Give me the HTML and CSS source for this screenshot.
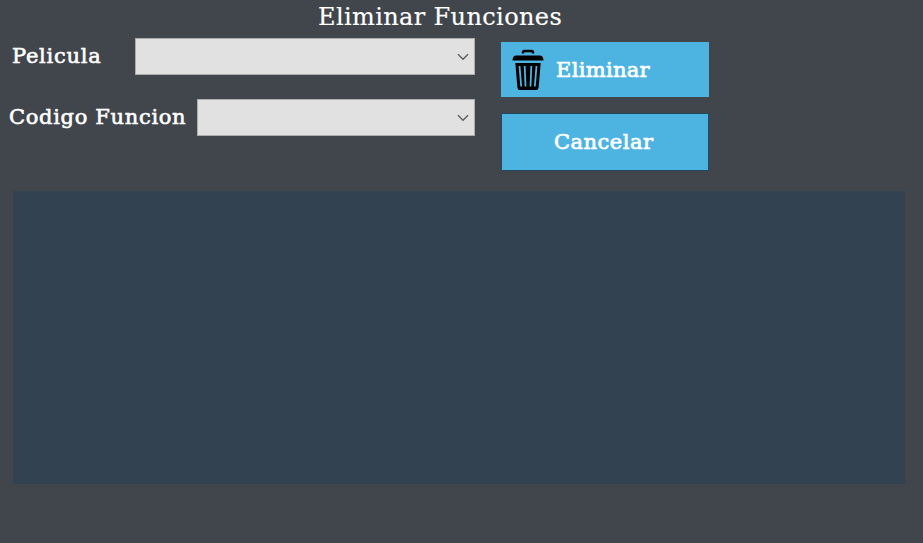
FILE: index.html
```html
<!DOCTYPE html>
<html lang="es">
<head>
<meta charset="utf-8">
<title>Eliminar Funciones</title>
<link rel="stylesheet" href="styles.css">
</head>
<body>
<h1 class="title"><span>Eliminar Funciones</span></h1>
<main class="top">
  <div class="fields">
    <div class="field">
      <label class="label pelicula"><span>Pelicula</span></label>
      <div class="combo"><svg width="12" height="8" viewBox="0 0 12 8"><path d="M1 1.2 6 6.2 11 1.2"/></svg></div>
    </div>
    <div class="field">
      <label class="label codigo"><span>Codigo Funcion</span></label>
      <div class="combo"><svg width="12" height="8" viewBox="0 0 12 8"><path d="M1 1.2 6 6.2 11 1.2"/></svg></div>
    </div>
  </div>
  <div class="actions">
    <button class="btn delete">
      <svg class="trash" width="32" height="42" viewBox="0 0 32 42">
        <path class="handle" d="M11 4.500V3.600Q11 2 12.600 2H19.400Q21 2 21 3.600V4.500"/>
        <path d="M4.500 6.500H27.500Q31.500 6.500 31.500 11.500H.500Q.500 6.500 4.500 6.500Z"/>
        <path d="M3.300 14H28.700L26.600 38.500Q26.400 41 24 41H8Q5.600 41 5.400 38.500Z"/>
        <path class="slots" d="M7.500 17 9.200 37.500M12.700 17 13.500 37.500M19.300 17 18.500 37.500M24.500 17 22.800 37.500"/>
      </svg>
      <span>Eliminar</span>
    </button>
    <button class="btn cancel"><span>Cancelar</span></button>
  </div>
</main>
<section class="panel"></section>
</body>
</html>
```

FILE: styles.css
```css
* { box-sizing: border-box; }
body {
  margin: 0;
  width: 923px;
  height: 543px;
  overflow: hidden;
  background: #41454c;
  color: #fff;
  font-family: Rockwell, "DejaVu Serif", serif;
}
.title {
  margin: 0;
  height: 38px;
  padding-left: 318px;
  font-size: 24px;
  font-weight: 400;
  line-height: 34px;
  white-space: nowrap;
  letter-spacing: 0.38px;
  -webkit-text-stroke: 0.2px #fff;
}
.top { display: flex; height: 153px; }
.fields { display: flex; flex-direction: column; gap: 24px; width: 475px; }
.field { display: flex; height: 37px; }
.label {
  flex: none;
  font-size: 21px;
  line-height: 37px;
  white-space: nowrap;
  -webkit-text-stroke: 0.6px #fff;
}
.pelicula { width: 135px; padding-left: 12px; letter-spacing: 0.75px; }
.codigo { width: 197px; padding-left: 9px; letter-spacing: 0.67px; }
.combo {
  flex: 1;
  display: flex;
  align-items: center;
  justify-content: flex-end;
  padding-right: 5px;
  background: #e1e1e1;
  border: 1px solid #adadad;
}
.combo svg { fill: none; stroke: #606060; stroke-width: 1.5; }
.actions { padding: 4px 0 0 26px; }
.btn {
  display: flex;
  align-items: center;
  margin: 0;
  border: 0;
  background: #4db4e2;
  color: #fff;
  font: 21px Rockwell, "DejaVu Serif", serif;
  -webkit-text-stroke: 0.7px #fff;
  white-space: nowrap;
}
.delete { width: 208px; height: 55px; padding: 0 0 0 11px; gap: 12px; letter-spacing: 0.3px; }
.cancel {
  width: 208px;
  height: 58px;
  margin-top: 16px;
  padding: 0 0 0 52px;
  border: 1px solid #234b60;
  letter-spacing: 0.5px;
}
.trash { fill: #000; }
.handle { fill: none; stroke: #000; stroke-width: 2.5; }
.slots { fill: none; stroke: #4db4e2; stroke-width: 1.8; }
.panel { width: 892px; height: 293px; margin-left: 13px; background: #324251; }
```
